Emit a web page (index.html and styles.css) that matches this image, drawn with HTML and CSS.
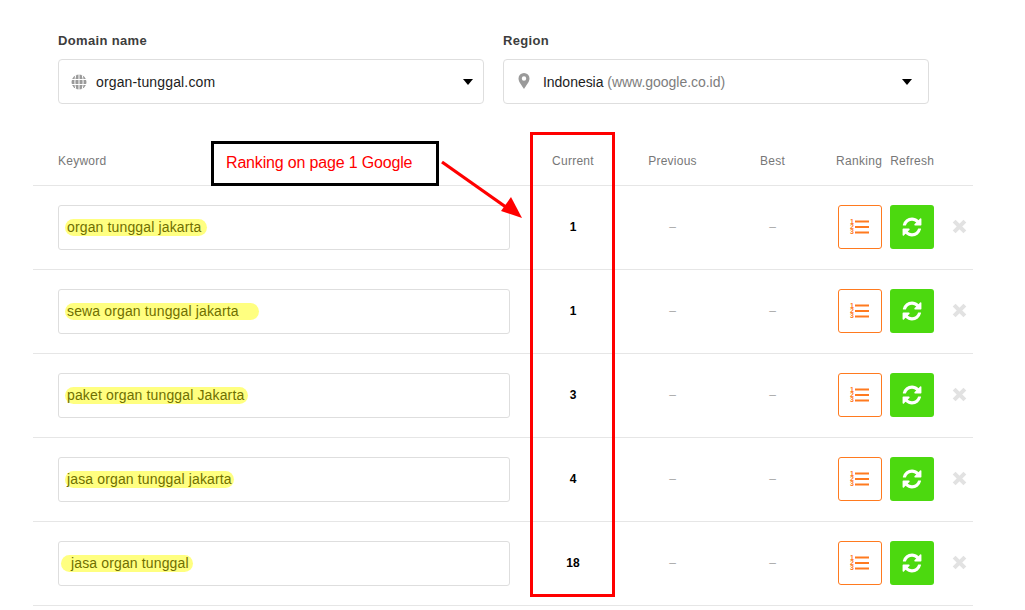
FILE: index.html
```html
<!DOCTYPE html>
<html lang="en">
<head>
<meta charset="utf-8">
<title>Rank tracker</title>
<link rel="stylesheet" href="styles.css">
</head>
<body>
<svg class="defs" width="0" height="0" aria-hidden="true">
  <symbol id="i-refresh" viewBox="0 0 1792 1792">
    <path fill="#fff" d="M1639 1056q0 5-1 7-64 268-268 434.500t-478 166.500q-146 0-282.500-55t-243.500-157l-129 129q-19 19-45 19t-45-19-19-45v-448q0-26 19-45t45-19h448q26 0 45 19t19 45-19 45l-137 137q71 66 161 102t187 36q134 0 250-65t186-179q11-17 53-117 8-23 30-23h192q13 0 22.500 9.500t9.500 22.500zm25-800v448q0 26-19 45t-45 19h-448q-26 0-45-19t-19-45 19-45l138-138q-148-137-349-137-134 0-250 65t-186 179q-11 17-53 117-8 23-30 23h-199q-13 0-22.500-9.500t-9.500-22.500v-7q65-268 270-434.500t480-166.500q146 0 284 55.500t245 156.500l130-129q19-19 45-19t45 19 19 45z"/>
  </symbol>
  <symbol id="i-x" viewBox="0 0 14 14">
    <path d="M2 2l10 10M12 2L2 12" stroke="#e2e2e2" stroke-width="3.800"/>
  </symbol>
  <symbol id="i-lines" viewBox="0 0 15 16">
    <path d="M0 2.500h14M0 8h14M0 13.500h14" stroke="#ff7a1f" stroke-width="2.200"/>
  </symbol>
</svg>
<main class="page">
  <section class="filters">
    <div class="field field-domain">
      <div class="field-label">Domain name</div>
      <div class="select">
        <svg class="select-icon" viewBox="0 0 16 16" width="16" height="16"><circle cx="8" cy="8" r="7.500" fill="#9a9a9a"/><path d="M0 5.500h16M0 10.500h16M8 0v16M4.800 1C3.600 5 3.600 11 4.800 15M11.200 1c1.200 4 1.200 10 0 14" stroke="#fff" stroke-width="1" fill="none"/></svg>
        <span class="select-text">organ-tunggal.com</span>
        <span class="caret"></span>
      </div>
    </div>
    <div class="field field-region">
      <div class="field-label">Region</div>
      <div class="select select-region">
        <svg class="select-icon pin" viewBox="0 0 12 16" width="12" height="16"><path fill="#9a9a9a" fill-rule="evenodd" d="M6 0a5.500 5.500 0 0 1 5.500 5.500C11.500 9 8 12.500 6 16 4 12.500.5 9 .5 5.500A5.500 5.500 0 0 1 6 0zm0 3.300a2.200 2.200 0 1 0 0 4.400 2.200 2.200 0 0 0 0-4.400z"/></svg>
        <span class="select-text">Indonesia <span class="muted">(www.google.co.id)</span></span>
        <span class="caret"></span>
      </div>
    </div>
  </section>

  <section class="table">
    <div class="row head">
      <div>Keyword</div>
      <div class="center">Current</div>
      <div class="center">Previous</div>
      <div class="center">Best</div>
      <div class="head-actions"><span>Ranking</span><span>Refresh</span></div>
    </div>

    <div class="row">
      <div class="input"><span class="mark w1">organ tunggal jakarta</span></div>
      <div class="center current">1</div>
      <div class="center dash">–</div>
      <div class="center dash">–</div>
      <div class="actions">
        <button class="btn btn-list"><span class="nums"><span>1</span><span>2</span><span>3</span></span><svg width="15" height="16"><use href="#i-lines"/></svg></button>
        <button class="btn btn-refresh"><svg width="22" height="22"><use href="#i-refresh"/></svg></button>
        <svg class="remove" width="15" height="15"><use href="#i-x"/></svg>
      </div>
    </div>

    <div class="row">
      <div class="input"><span class="mark w2">sewa organ tunggal jakarta</span></div>
      <div class="center current">1</div>
      <div class="center dash">–</div>
      <div class="center dash">–</div>
      <div class="actions">
        <button class="btn btn-list"><span class="nums"><span>1</span><span>2</span><span>3</span></span><svg width="15" height="16"><use href="#i-lines"/></svg></button>
        <button class="btn btn-refresh"><svg width="22" height="22"><use href="#i-refresh"/></svg></button>
        <svg class="remove" width="15" height="15"><use href="#i-x"/></svg>
      </div>
    </div>

    <div class="row">
      <div class="input"><span class="mark w3">paket organ tunggal Jakarta</span></div>
      <div class="center current">3</div>
      <div class="center dash">–</div>
      <div class="center dash">–</div>
      <div class="actions">
        <button class="btn btn-list"><span class="nums"><span>1</span><span>2</span><span>3</span></span><svg width="15" height="16"><use href="#i-lines"/></svg></button>
        <button class="btn btn-refresh"><svg width="22" height="22"><use href="#i-refresh"/></svg></button>
        <svg class="remove" width="15" height="15"><use href="#i-x"/></svg>
      </div>
    </div>

    <div class="row">
      <div class="input"><span class="mark w4">jasa organ tunggal jakarta</span></div>
      <div class="center current">4</div>
      <div class="center dash">–</div>
      <div class="center dash">–</div>
      <div class="actions">
        <button class="btn btn-list"><span class="nums"><span>1</span><span>2</span><span>3</span></span><svg width="15" height="16"><use href="#i-lines"/></svg></button>
        <button class="btn btn-refresh"><svg width="22" height="22"><use href="#i-refresh"/></svg></button>
        <svg class="remove" width="15" height="15"><use href="#i-x"/></svg>
      </div>
    </div>

    <div class="row">
      <div class="input"><span class="mark w5">jasa organ tunggal</span></div>
      <div class="center current">18</div>
      <div class="center dash">–</div>
      <div class="center dash">–</div>
      <div class="actions">
        <button class="btn btn-list"><span class="nums"><span>1</span><span>2</span><span>3</span></span><svg width="15" height="16"><use href="#i-lines"/></svg></button>
        <button class="btn btn-refresh"><svg width="22" height="22"><use href="#i-refresh"/></svg></button>
        <svg class="remove" width="15" height="15"><use href="#i-x"/></svg>
      </div>
    </div>
  </section>
</main>

<div class="note">Ranking on page 1 Google</div>
<div class="red-frame"></div>
<svg class="arrow" viewBox="0 0 90 66" width="90" height="66"><path d="M2 2L70 50" stroke="#f00" stroke-width="3.200" fill="none"/><path d="M82 58L61 51 71 37z" fill="#f00"/></svg>
</body>
</html>
```

FILE: styles.css
```css
* { box-sizing: border-box; }
html, body { margin: 0; padding: 0; background: #fff; }
body {
  width: 1025px;
  height: 610px;
  overflow: hidden;
  position: relative;
  font-family: "Liberation Sans", Arial, sans-serif;
  font-size: 14px;
  color: #222;
}
.defs { display: block; height: 0; }
.page { padding: 33px 0 0 33px; width: 973px; }

.filters { display: flex; gap: 19px; padding-left: 25px; }
.field-domain { width: 426px; }
.field-region { width: 426px; }
.field-label {
  font-size: 13px;
  font-weight: bold;
  line-height: 15px;
  letter-spacing: .35px;
  color: #3d3d3d;
  margin-bottom: 11px;
}
.select {
  display: flex;
  align-items: center;
  height: 45px;
  padding: 0 10px 0 12px;
  border: 1px solid #dedede;
  border-radius: 4px;
  color: #1c1c1c;
  letter-spacing: .15px;
}
.select-region { padding-right: 16px; letter-spacing: -.03px; }
.select-icon { flex: none; margin-right: 9px; }
.select-icon.pin { margin-left: 2px; margin-right: 13px; margin-top: -2px; }
.select-text { flex: 1; }
.muted { color: #7d7d7d; }
.caret {
  width: 0; height: 0;
  border-left: 5.500px solid transparent;
  border-right: 5.500px solid transparent;
  border-top: 6px solid #000;
}

.table { margin-top: 28px; }
.row {
  display: grid;
  grid-template-columns: 465px 100px 99px 101px 1fr;
  align-items: center;
  padding: 19px 0 19px 25px;
  height: 84px;
  border-bottom: 1px solid #e6e6e6;
}
.row.head {
  height: 54px;
  padding-top: 21px;
  padding-bottom: 16px;
  font-size: 12px;
  letter-spacing: .25px;
  color: #777;
}
.center { text-align: center; }
.head-actions { display: flex; gap: 8px; padding-left: 13px; letter-spacing: .3px; }
.input {
  width: 452px;
  height: 45px;
  border: 1px solid #dedede;
  border-radius: 3px;
  display: flex;
  align-items: center;
  padding-left: 6px;
  font-size: 14px;
  letter-spacing: .14px;
  color: #6f6f00;
}
.mark {
  display: inline-block;
  background: #ffff80;
  border-radius: 9px;
  line-height: 17px;
  padding: 0 4px 0 2px;
  white-space: nowrap;
}
.w1 { padding-right: 6px; }
.w2 { padding-right: 20px; }
.w4 { padding-right: 2px; }
.w5 { margin-left: -4px; padding-left: 10px; }

.current, .dash { position: relative; top: -1px; }
.current { font-size: 12px; font-weight: bold; color: #000; }
.dash { color: #aaa; font-size: 12px; }

.actions { display: flex; align-items: center; padding-left: 15px; position: relative; top: -1px; }
.btn {
  width: 44px;
  height: 44px;
  padding: 0;
  border-radius: 3px;
  display: flex;
  align-items: center;
  justify-content: center;
  background: #fff;
}
.btn-list { border: 1px solid #ff7a1f; margin-right: 8px; gap: 1px; }
.btn-refresh { border: 0; background: #4cd90f; margin-right: 18px; }
.nums {
  display: flex;
  flex-direction: column;
  font-size: 7px;
  font-weight: bold;
  line-height: 5px;
  color: #ff7a1f;
}
.remove { flex: none; }

.note {
  position: absolute;
  left: 211px;
  top: 141px;
  width: 228px;
  height: 45px;
  border: 3px solid #000;
  padding-left: 12px;
  line-height: 38px;
  font-size: 16px;
  letter-spacing: -.17px;
  color: #f00;
  background: #fff;
}
.red-frame {
  position: absolute;
  left: 530px;
  top: 132px;
  width: 85px;
  height: 465px;
  border: 3px solid #f00;
}
.arrow { position: absolute; left: 440px; top: 160px; }
```
